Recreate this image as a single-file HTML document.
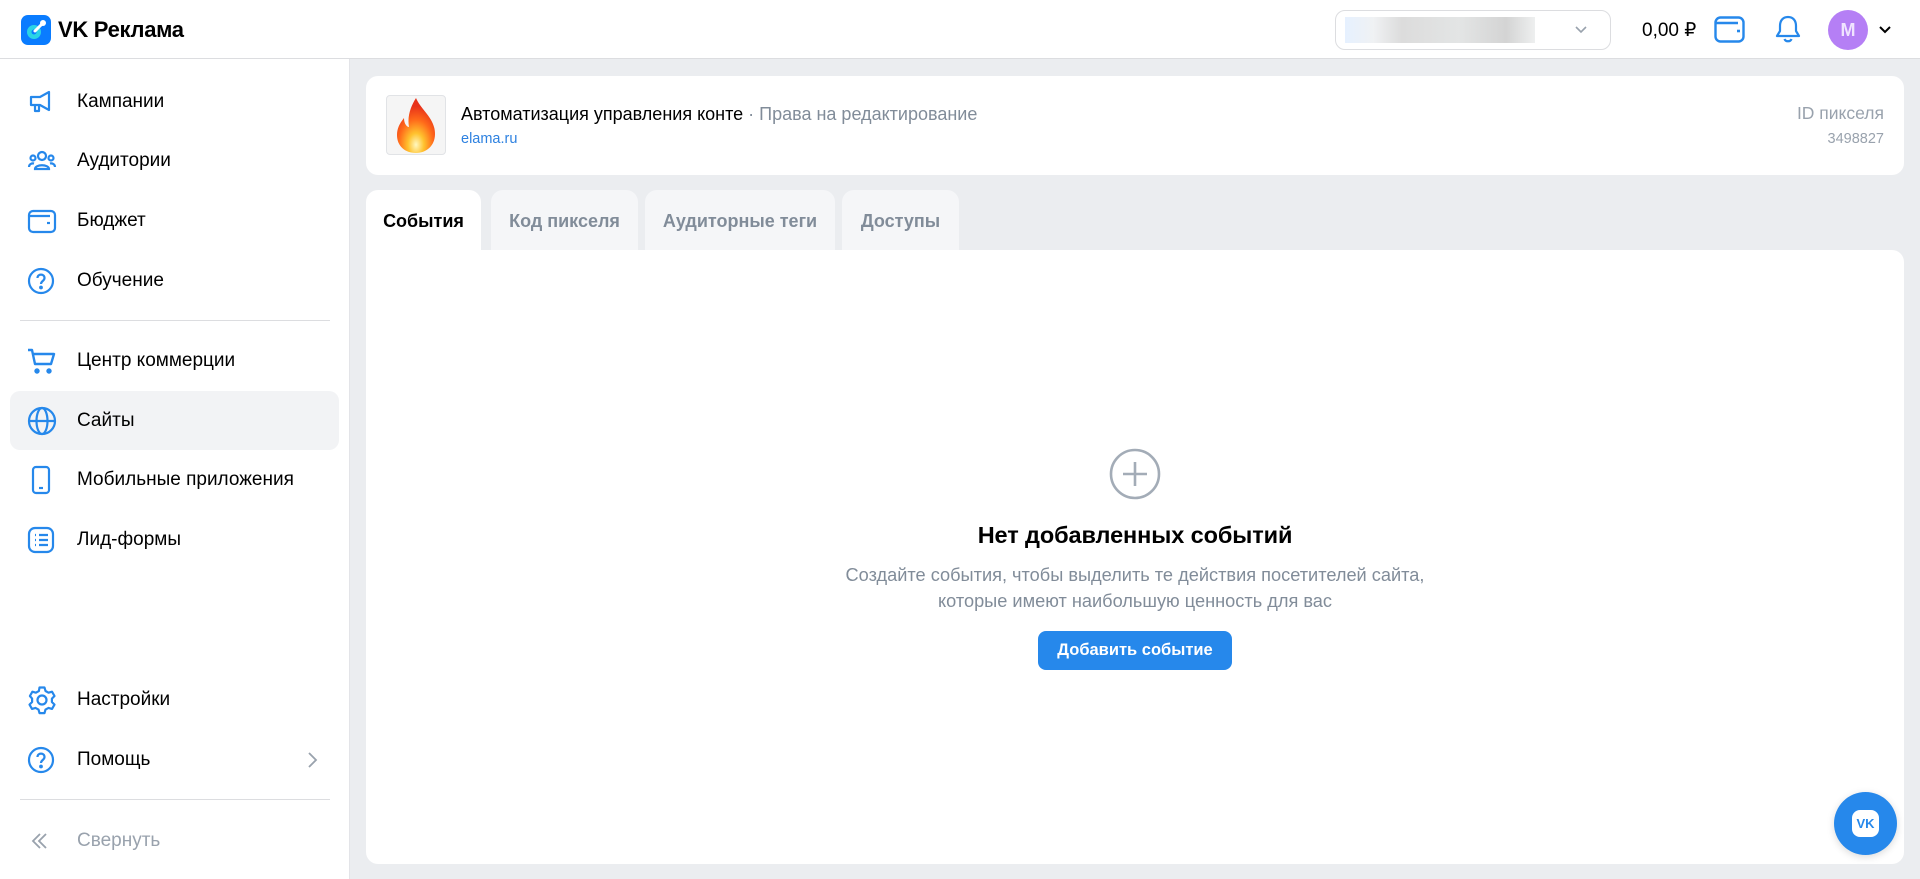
<!DOCTYPE html>
<html><head><meta charset="utf-8"><style>
*{box-sizing:border-box;margin:0;padding:0}
body{width:1920px;height:879px;overflow:hidden;background:#ebedf0;font-family:"Liberation Sans","Noto Sans CJK SC",sans-serif;color:#000;position:relative}
.hdr{position:absolute;left:0;top:0;width:1920px;height:59px;background:#fff;border-bottom:1px solid #dcdde0}
.side{position:absolute;left:0;top:59px;width:350px;height:820px;background:#fff;border-right:1px solid #e3e4e8}
.nav{position:absolute;left:10px;width:329px;height:59px;border-radius:10px;display:flex;align-items:center}
.nav svg{position:absolute;left:17px;top:50%;transform:translateY(-50%)}
.nav span{position:absolute;left:67px;font-size:19px}
.act{background:#f2f3f5}
.div{position:absolute;left:20px;width:310px;height:1px;background:#dcdde0}
.card{position:absolute;background:#fff;border-radius:12px}
.tab{position:absolute;top:190px;height:62px;border-radius:12px 12px 0 0;background:#f5f6f8;font-size:18px;font-weight:bold;color:#818c99;display:flex;align-items:center;justify-content:center}
</style></head><body>
<div class="hdr">
 <svg style="position:absolute;left:21px;top:15px" width="30" height="30" viewBox="0 0 30 30"><rect width="30" height="30" rx="7" fill="#0a7cff"/><circle cx="13" cy="17" r="7" fill="#2ad4e6"/><circle cx="13" cy="17" r="2.5" fill="#0a7cff"/><path d="M14 16 L22 8" stroke="#fff" stroke-width="3" stroke-linecap="round"/><circle cx="22" cy="8" r="3" fill="#fff"/></svg>
 <div style="position:absolute;left:58px;top:17px;font-size:22px;font-weight:bold;letter-spacing:-0.3px">VK Реклама</div>
 <div style="position:absolute;left:1335px;top:10px;width:276px;height:40px;border:1px solid #dcdde0;border-radius:10px">
  <div style="position:absolute;left:9px;top:6px;width:190px;height:26px;background:linear-gradient(90deg,#e3efff 0,#eef0f2 15%,#d8d8d8 30%,#e0e2e2 60%,#cfcfcf 85%,#eceeee 100%);opacity:.9"></div>
  <svg style="position:absolute;left:238px;top:14px" width="14" height="10" viewBox="0 0 14 10"><path d="M2 2 L7 7 L12 2" stroke="#99a2ad" stroke-width="1.6" fill="none"/></svg>
 </div>
 <div style="position:absolute;left:1642px;top:19px;font-size:19px">0,00 ₽</div>
 <svg style="position:absolute;left:1714px;top:16px" width="31" height="27" viewBox="0 0 31 27"><rect x="1.5" y="1.5" width="28" height="24" rx="5" fill="none" stroke="#2688eb" stroke-width="2.4"/><path d="M1.5 7 H24" stroke="#2688eb" stroke-width="2.4"/><path d="M23 15 h3" stroke="#2688eb" stroke-width="2.6"/></svg>
 <svg style="position:absolute;left:1775px;top:15px" width="26" height="29" viewBox="0 0 26 29"><path d="M13 2 C7.5 2 5 6 5 11 V16 L2 21 H24 L21 16 V11 C21 6 18.5 2 13 2 Z" fill="none" stroke="#2688eb" stroke-width="2.2" stroke-linejoin="round"/><path d="M9.5 24 C10.5 27 15.5 27 16.5 24" fill="none" stroke="#2688eb" stroke-width="2.2"/></svg>
 <div style="position:absolute;left:1828px;top:10px;width:40px;height:40px;border-radius:50%;background:#b57ff5;color:#f0e4ff;font-size:18px;font-weight:bold;text-align:center;line-height:40px">M</div>
 <svg style="position:absolute;left:1878px;top:25px" width="14" height="10" viewBox="0 0 14 10"><path d="M2 2 L7 7 L12 2" stroke="#000" stroke-width="2" fill="none"/></svg>
</div>

<div class="side">
 <div class="nav" style="top:13px"><svg width="28" height="28" viewBox="0 0 28 28" fill="none" stroke="#2688eb" stroke-width="2.2" stroke-linejoin="round"><path d="M4 9 H13 L22 4 V22 L13 17 H4 Z"/><path d="M8 17 V23 H12 V17"/></svg><span>Кампании</span></div>
 <div class="nav" style="top:72px"><svg width="30" height="28" viewBox="0 0 30 28" fill="none" stroke="#2688eb" stroke-width="2.2"><circle cx="15" cy="9" r="4"/><path d="M8 22 C8 17 22 17 22 22 Z"/><circle cx="6" cy="11" r="2.5"/><circle cx="24" cy="11" r="2.5"/><path d="M2 20 C2 17 5 16 7 16.5 M28 20 C28 17 25 16 23 16.5"/></svg><span>Аудитории</span></div>
 <div class="nav" style="top:132px"><svg width="30" height="28" viewBox="0 0 30 28" fill="none" stroke="#2688eb" stroke-width="2.2"><rect x="2" y="4" width="26" height="21" rx="4"/><path d="M2 9 H23"/><path d="M20 16 h3"/></svg><span>Бюджет</span></div>
 <div class="nav" style="top:192px"><svg width="28" height="28" viewBox="0 0 28 28" fill="none" stroke="#2688eb" stroke-width="2.2"><circle cx="14" cy="14" r="12"/><path d="M10.5 11 C10.5 6.5 17.5 6.5 17.5 11 C17.5 14 14 14 14 17"/><circle cx="14" cy="20.5" r="0.8" fill="#2688eb"/></svg><span>Обучение</span></div>
 <div class="div" style="top:261px"></div>
 <div class="nav" style="top:272px"><svg width="30" height="28" viewBox="0 0 30 28" fill="none" stroke="#2688eb" stroke-width="2.4" stroke-linejoin="round"><path d="M1 3 H5 L8 17 H24 L27 7 H6"/><circle cx="10" cy="24" r="1.5" fill="#2688eb"/><circle cx="22" cy="24" r="1.5" fill="#2688eb"/></svg><span>Центр коммерции</span></div>
 <div class="nav act" style="top:332px"><svg width="30" height="30" viewBox="0 0 30 30" fill="none" stroke="#2688eb" stroke-width="2.2"><circle cx="15" cy="15" r="13"/><ellipse cx="15" cy="15" rx="5.5" ry="13"/><path d="M2 15 H28"/></svg><span>Сайты</span></div>
 <div class="nav" style="top:391px"><svg width="28" height="30" viewBox="0 0 28 30" fill="none" stroke="#2688eb" stroke-width="2.2"><rect x="6" y="2" width="16" height="26" rx="3"/><path d="M12 23 h4"/></svg><span>Мобильные приложения</span></div>
 <div class="nav" style="top:451px"><svg width="28" height="28" viewBox="0 0 28 28" fill="none" stroke="#2688eb" stroke-width="2.2"><rect x="2" y="2" width="24" height="24" rx="6"/><path d="M8 9h1M12 9h9M8 14h1M12 14h9M8 19h1M12 19h9"/></svg><span>Лид-формы</span></div>
 <div class="nav" style="top:611px"><svg width="30" height="30" viewBox="0 0 30 30" fill="none" stroke="#2688eb" stroke-width="2.2" stroke-linejoin="round"><circle cx="15" cy="15" r="4.5"/><path d="M12.5 2.5 h5 l1 3.5 3 1.7 3.5-1 2.5 4.3-2.6 2.6 v3.4 l2.6 2.6-2.5 4.3-3.5-1-3 1.7-1 3.5 h-5 l-1-3.5-3-1.7-3.5 1-2.5-4.3 2.6-2.6 v-3.4 L2.9 11 5.4 6.7l3.5 1 3-1.7z"/></svg><span>Настройки</span></div>
 <div class="nav" style="top:671px"><svg width="28" height="28" viewBox="0 0 28 28" fill="none" stroke="#2688eb" stroke-width="2.2"><circle cx="14" cy="14" r="12"/><path d="M10.5 11 C10.5 6.5 17.5 6.5 17.5 11 C17.5 14 14 14 14 17"/><circle cx="14" cy="20.5" r="0.8" fill="#2688eb"/></svg><span>Помощь</span><svg style="left:296px" width="12" height="18" viewBox="0 0 12 18"><path d="M3 2 L10 9 L3 16" stroke="#99a2ad" stroke-width="1.8" fill="none"/></svg></div>
 <div class="div" style="top:740px"></div>
 <div class="nav" style="top:752px"><svg width="28" height="20" viewBox="0 0 28 20" fill="none" stroke="#99a2ad" stroke-width="1.8"><path d="M13 3 L6 10 L13 17 M19 3 L12 10 L19 17"/></svg><span style="color:#99a2ad">Свернуть</span></div>
</div>

<div class="card" style="left:366px;top:76px;width:1538px;height:99px">
 <div style="position:absolute;left:20px;top:19px;width:60px;height:60px;border:1px solid #e1e3e6;border-radius:4px;background:#f5f5f5;display:flex;align-items:center;justify-content:center;overflow:hidden">
  <svg width="50" height="58" viewBox="0 0 50 58"><defs><radialGradient id="f" cx="50%" cy="85%" r="70%"><stop offset="0" stop-color="#fff8c0"/><stop offset=".3" stop-color="#ffc22e"/><stop offset=".65" stop-color="#ff6a1a"/><stop offset="1" stop-color="#e8321a"/></radialGradient></defs><path d="M25 2 C30 14 44 22 44 38 C44 50 35 57 25 57 C14 57 6 50 6 39 C6 31 10 26 13 22 C13 28 16 31 18 31 C16 20 20 10 25 2 Z" fill="url(#f)"/></svg>
 </div>
 <div style="position:absolute;left:95px;top:28px;font-size:18px;white-space:nowrap">Автоматизация управления конте <span style="color:#818c99">· Права на редактирование</span></div>
 <div style="position:absolute;left:95px;top:55px;font-size:14.5px;color:#2d81e0">elama.ru</div>
 <div style="position:absolute;right:20px;top:27px;font-size:17.5px;color:#99a2ad">ID пикселя</div>
 <div style="position:absolute;right:20px;top:55px;font-size:14.5px;color:#99a2ad">3498827</div>
</div>

<div class="tab" style="left:366px;width:115px;background:#fff;color:#000">События</div>
<div class="tab" style="left:491px;width:147px">Код пикселя</div>
<div class="tab" style="left:645px;width:190px">Аудиторные теги</div>
<div class="tab" style="left:842px;width:117px">Доступы</div>

<div class="card" style="left:366px;top:250px;width:1538px;height:614px;border-radius:0 12px 12px 12px">
 <svg style="position:absolute;left:743px;top:198px" width="52" height="52" viewBox="0 0 52 52" fill="none" stroke="#a3acb7" stroke-width="2.6"><circle cx="26" cy="26" r="24"/><path d="M26 14 V38 M14 26 H38"/></svg>
 <div style="position:absolute;left:0;width:1538px;top:272px;text-align:center;font-size:23.5px;font-weight:bold;letter-spacing:-0.1px">Нет добавленных событий</div>
 <div style="position:absolute;left:0;width:1538px;top:312px;text-align:center;font-size:18.2px;line-height:26px;color:#818c99">Создайте события, чтобы выделить те действия посетителей сайта,<br>которые имеют наибольшую ценность для вас</div>
 <div style="position:absolute;left:672px;top:381px;width:194px;height:39px;background:#2688eb;border-radius:8px;color:#fff;font-size:16.5px;font-weight:bold;text-align:center;line-height:39px">Добавить событие</div>
</div>

<div style="position:absolute;left:1834px;top:792px;width:63px;height:63px;border-radius:50%;background:#2688eb;box-shadow:0 2px 8px rgba(0,0,0,.15)">
 <div style="position:absolute;left:18px;top:18px;width:27px;height:27px;border-radius:8px;background:#fff;color:#2688eb;font-weight:bold;font-size:13px;text-align:center;line-height:27px">VK</div>
</div>
</body></html>
